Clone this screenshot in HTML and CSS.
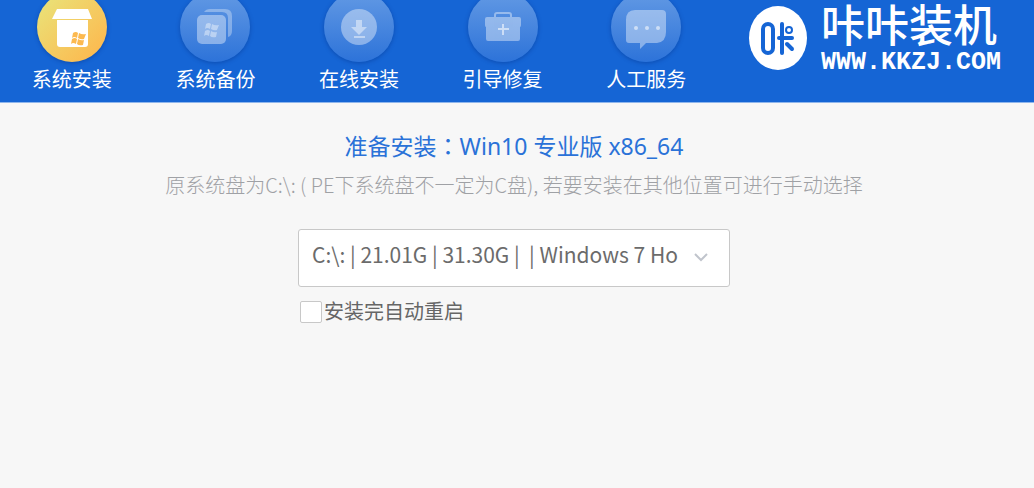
FILE: index.html
```html
<!DOCTYPE html>
<html lang="zh-CN">
<head>
    <meta charset="UTF-8">
    <meta name="viewport" content="width=device-width, initial-scale=1.0">
    <title>咔咔装机</title>
    <link rel="stylesheet" href="styles.css">
</head>
<body>
    <header class="header">
        <nav class="nav">
            <button type="button" class="nav-item active">
                <svg class="nav-icon" viewBox="0 0 70 70">
                    <path d="M20 17h31l4 10H15z" fill="#fff"/>
                    <path d="M20 28h31v24q0 3-3 3H23q-3 0-3-3z" fill="#fff"/>
                    <g transform="translate(34 39)" fill="#fcb94f">
                        <path d="M2 2q3-2 5 0L6 7q-3-2-5 0zM8 2q3 2 7 1l-2 5q-3 1-6-1zM1 8q3-2 5 0l-1 5q-3-2-5 0zM7 8q3 2 6 1l-1 5q-4 1-6-1z"/>
                    </g>
                </svg>
                <span>系统安装</span>
            </button>
            <button type="button" class="nav-item">
                <svg class="nav-icon" viewBox="0 0 70 70">
                    <path d="M24 20q2-3 6-3h15q7 0 7 7v15q0 5-4 6V26q0-6-6-6z" fill="#fff" opacity=".32"/>
                    <rect x="17" y="23" width="29" height="29" rx="5" fill="#fff" opacity=".4"/>
                    <g transform="translate(24 31)" fill="#fff" opacity=".4">
                        <path d="M2 1q3-2 5 0L6 6q-3-2-5 0zM8 1q3 2 7 1l-2 5q-3 1-6-1zM1 8q3-2 5 0l-1 5q-3-2-5 0zM7 8q3 2 6 1l-1 5q-4 1-6-1z"/>
                    </g>
                </svg>
                <span>系统备份</span>
            </button>
            <button type="button" class="nav-item">
                <svg class="nav-icon" viewBox="0 0 70 70">
                    <circle cx="35" cy="35" r="18" fill="#fff" opacity=".4"/>
                    <path d="M32 28h6v7h5l-8 8-8-8h5zM30 44h11v2H30z" fill="#fff" opacity=".45"/>
                </svg>
                <span>在线安装</span>
            </button>
            <button type="button" class="nav-item">
                <svg class="nav-icon" viewBox="0 0 70 70">
                    <path d="M27 25v-2q0-2 2-2h12q2 0 2 2v2" fill="none" stroke="#fff" stroke-width="2" opacity=".4"/>
                    <path d="M19 25h32q2 0 2 2v6q0 2-1 2v12q0 2-2 2H20q-2 0-2-2V35q-1 0-1-2v-6q0-2 2-2z" fill="#fff" opacity=".4"/>
                    <path d="M35 32v11M30 37h11" stroke="#fff" stroke-width="2" opacity=".55"/>
                </svg>
                <span>引导修复</span>
            </button>
            <button type="button" class="nav-item">
                <svg class="nav-icon" viewBox="0 0 70 70">
                    <path d="M24 18h27q4 0 4 4v18q0 10-9 11H35l-6 6v-6H18q-3 0-3-3V28q0-10 9-10z" fill="#fff" opacity=".4"/>
                    <g fill="#fff" opacity=".55">
                        <circle cx="25" cy="36" r="2"/>
                        <circle cx="36" cy="36" r="2"/>
                        <circle cx="47" cy="36" r="2"/>
                    </g>
                </svg>
                <span>人工服务</span>
            </button>
        </nav>
        <div class="brand">
            <svg class="brand-logo" viewBox="0 0 58 64">
                <ellipse cx="29" cy="32" rx="29" ry="32" fill="#fff"/>
                <g fill="none" stroke="#1565d5" stroke-width="4" stroke-linecap="round">
                    <rect x="14" y="18" width="10" height="29" rx="5"/>
                    <line x1="33" y1="18" x2="33" y2="47"/>
                    <line x1="30" y1="32" x2="43" y2="32"/>
                    <line x1="38" y1="38" x2="43" y2="43"/>
                    <circle cx="40" cy="24" r="3" stroke-width="2"/>
                </g>
            </svg>
            <div class="brand-text">
                <div class="brand-name">咔咔装机</div>
                <div class="brand-url">WWW.KKZJ.COM</div>
            </div>
        </div>
    </header>

    <main class="content">
        <h1 class="title">准备安装<span class="colon" lang="zh-TW">：</span>Win10 专业版 x86_64</h1>
        <p class="hint">原系统盘为C:\: ( PE下系统盘不一定为C盘), 若要安装在其他位置可进行手动选择</p>
        <form class="form">
            <div class="select-box">
                <select class="disk" aria-label="系统盘">
                    <option>C:\: | 21.01G | 31.30G |&nbsp; | Windows 7 Home</option>
                </select>
                <svg class="arrow" viewBox="0 0 14 10"><path d="M1 1l6 6 6-6" fill="none" stroke="#c0c4cc" stroke-width="2"/></svg>
            </div>
            <label class="restart"><input type="checkbox" class="check">安装完自动重启</label>
        </form>
    </main>
</body>
</html>
```
FILE: styles.css
```css
html, body {
    margin: 0;
    padding: 0;
    min-height: 100%;
    background: #f7f7f7;
    font-family: 'Noto Sans', 'Noto Sans CJK SC', sans-serif;
}

/* Top bar */
.header {
    display: flex;
    height: 102px;
    overflow: hidden;
    background: #1565d5;
    border-bottom: 1px solid #8fb6ec;
}

.nav {
    display: flex;
    flex: 1;
    margin-top: -8px;
}

.nav-item {
    display: flex;
    flex: 1;
    flex-direction: column;
    align-items: center;
    gap: 5px;
    padding: 0;
    border: 0;
    background: none;
    color: #fff;
    font-family: inherit;
    font-size: 20px;
    line-height: 26px;
    white-space: nowrap;
    cursor: pointer;
}

.nav-icon {
    width: 70px;
    height: 70px;
    border-radius: 50%;
    background: linear-gradient(#6299e4, #2d73d9);
    box-shadow: 0 1px 4px rgba(0, 40, 120, 0.4);
}
.active .nav-icon {
    background: linear-gradient(135deg, #e8e67c, #ffb44a);
}

.brand {
    display: flex;
    gap: 14px;
    width: 285px;
    padding: 6px 0 0 31px;
    color: #fff;
}

.brand-logo {
    width: 58px;
    height: 64px;
}

.brand-name {
    font-family: 'Liberation Sans', 'Noto Sans CJK SC', sans-serif;
    font-size: 44px;
    font-weight: 500;
    line-height: 42px;
    white-space: nowrap;
}

.brand-url {
    font-family: 'Liberation Mono', monospace;
    font-size: 25px;
    font-weight: bold;
    line-height: 30px;
}

/* Install options */
.content {
    display: flex;
    flex-direction: column;
    align-items: center;
    padding: 25px 6px 0 0;
}

.title {
    margin: 0;
    color: #2a72d8;
    font-size: 23px;
    font-weight: 400;
    line-height: 34px;
}

/* full-width colon sits in the middle of its box in the TC face */
.colon {
    font-family: 'Noto Sans CJK TC', sans-serif;
}

.hint {
    margin: 7px 0 0;
    color: #9fa1a5;
    font-family: 'Noto Sans CJK SC', sans-serif;
    font-size: 20px;
    font-weight: 300;
    line-height: 30px;
}

.form {
    width: 432px;
    max-width: 100%;
    margin-top: 29px;
}

.select-box {
    position: relative;
}

.disk {
    display: block;
    width: 100%;
    height: 58px;
    padding: 0 50px 8px 13px;
    border: 1px solid #c8c8c8;
    border-radius: 3px;
    background: #fff;
    color: #6b6b6b;
    font-family: 'Noto Sans CJK SC', sans-serif;
    font-size: 21px;
    appearance: none;
}

.arrow {
    position: absolute;
    top: 24px;
    right: 22px;
    width: 14px;
    height: 10px;
    pointer-events: none;
}

.restart {
    display: flex;
    align-items: center;
    gap: 2px;
    margin-top: 10px;
    color: #666;
    font-size: 20px;
    line-height: 30px;
}

.check {
    width: 22px;
    height: 22px;
    margin: 0 0 0 2px;
    border: 1px solid #c8c8c8;
    border-radius: 2px;
    background: #fff;
    appearance: none;
}
.check:checked {
    background: #1565d5;
}
```
